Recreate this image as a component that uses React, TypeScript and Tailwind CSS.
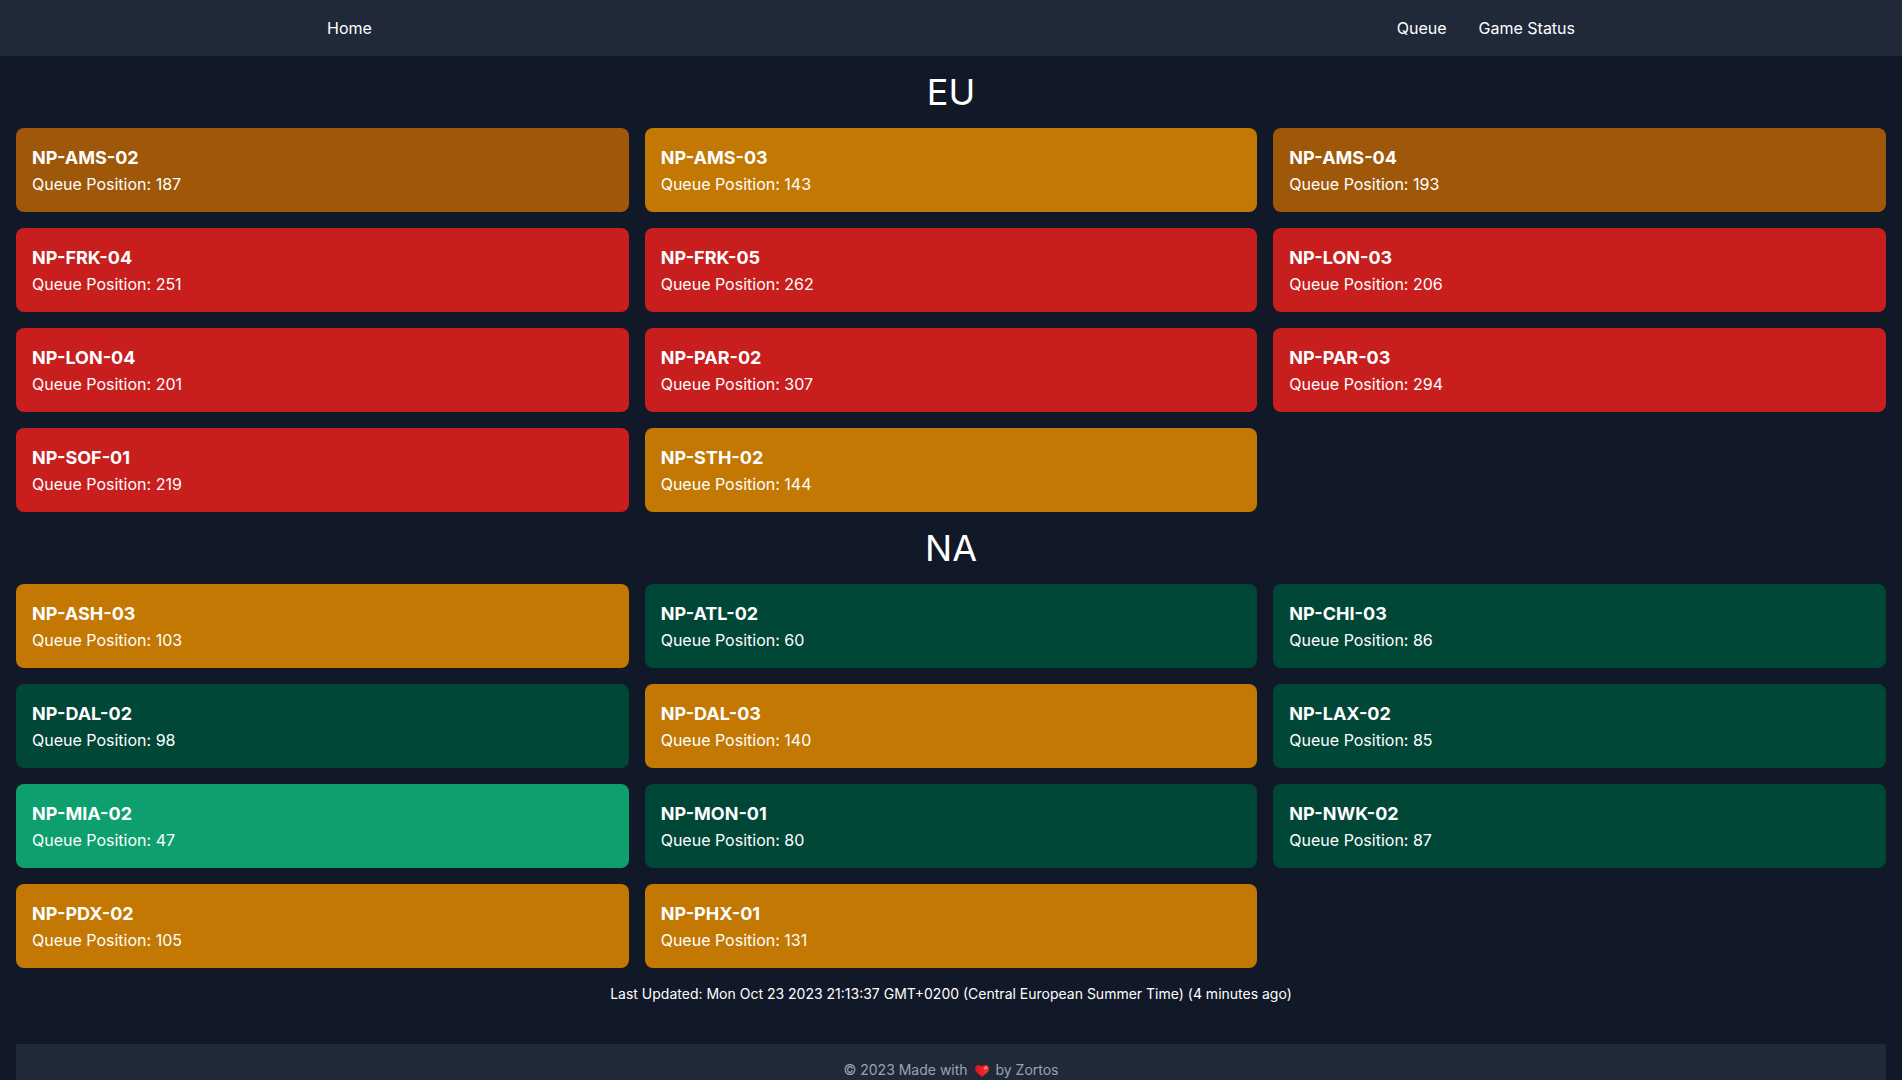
type Server = { name: string; position: number };

const regions: { name: string; servers: Server[] }[] = [
  {
    name: "EU",
    servers: [
      { name: "NP-AMS-02", position: 187 },
      { name: "NP-AMS-03", position: 143 },
      { name: "NP-AMS-04", position: 193 },
      { name: "NP-FRK-04", position: 251 },
      { name: "NP-FRK-05", position: 262 },
      { name: "NP-LON-03", position: 206 },
      { name: "NP-LON-04", position: 201 },
      { name: "NP-PAR-02", position: 307 },
      { name: "NP-PAR-03", position: 294 },
      { name: "NP-SOF-01", position: 219 },
      { name: "NP-STH-02", position: 144 },
    ],
  },
  {
    name: "NA",
    servers: [
      { name: "NP-ASH-03", position: 103 },
      { name: "NP-ATL-02", position: 60 },
      { name: "NP-CHI-03", position: 86 },
      { name: "NP-DAL-02", position: 98 },
      { name: "NP-DAL-03", position: 140 },
      { name: "NP-LAX-02", position: 85 },
      { name: "NP-MIA-02", position: 47 },
      { name: "NP-MON-01", position: 80 },
      { name: "NP-NWK-02", position: 87 },
      { name: "NP-PDX-02", position: 105 },
      { name: "NP-PHX-01", position: 131 },
    ],
  },
];

function cardColor(position: number) {
  if (position > 200) return "bg-[#c81e1e]";
  if (position > 150) return "bg-[#9f580a]";
  if (position > 100) return "bg-[#c27803]";
  if (position > 50) return "bg-[#014737]";
  return "bg-[#0e9f6e]";
}

function ServerCard({ name, position }: Server) {
  return (
    <article className={`rounded-lg p-4 ${cardColor(position)}`}>
      <h2 className="text-lg font-bold">{name}</h2>
      <p className="text-base">Queue Position: {position}</p>
    </article>
  );
}

function Heart() {
  return (
    <svg viewBox="0 0 14 12" className="mx-[3px] inline-block h-3 w-3.5" role="img" aria-label="love">
      <defs>
        <linearGradient id="heart" x1="0" y1="0" x2="1" y2="0">
          <stop offset="0" stopColor="#c8193c" />
          <stop offset="0.35" stopColor="#ec1c24" />
          <stop offset="1" stopColor="#f03a2e" />
        </linearGradient>
      </defs>
      <path
        d="M7 12C5.600 10 0 7.600 0 3.700 0 1.500 1.600 0 3.700 0 5.200 0 6.400 .8 7 2 7.600 .8 8.800 0 10.300 0 12.400 0 14 1.500 14 3.700 14 7.600 8.400 10 7 12Z"
        fill="url(#heart)"
      />
      <ellipse cx="10.600" cy="3" rx="1.800" ry="1.200" transform="rotate(-45 10.600 3)" fill="#f49a88" />
    </svg>
  );
}

export default function App() {
  return (
    <div className="min-h-screen bg-[#111827] font-[Inter,sans-serif] text-white">
      <header className="bg-[#1f2937]">
        <nav className="mx-auto flex h-14 max-w-7xl items-center justify-between px-4">
          <a href="#home">Home</a>
          <div className="flex gap-8">
            <a href="#queue">Queue</a>
            <a href="#status">Game Status</a>
          </div>
        </nav>
      </header>
      <main className="px-4">
        {regions.map((region) => (
          <section key={region.name}>
            <h1 className="py-4 text-center text-4xl">{region.name}</h1>
            <div className="grid grid-cols-3 gap-4">
              {region.servers.map((server) => (
                <ServerCard key={server.name} {...server} />
              ))}
            </div>
          </section>
        ))}
        <p className="mt-4 text-center text-sm">
          Last Updated: Mon Oct 23 2023 21:13:37 GMT+0200 (Central European Summer Time) (4 minutes ago)
        </p>
      </main>
      <footer className="mx-4 mt-10 bg-[#1f2937] py-4 text-center text-sm text-[#9ca3af]">
        © 2023 Made with <Heart /> by Zortos
      </footer>
    </div>
  );
}
